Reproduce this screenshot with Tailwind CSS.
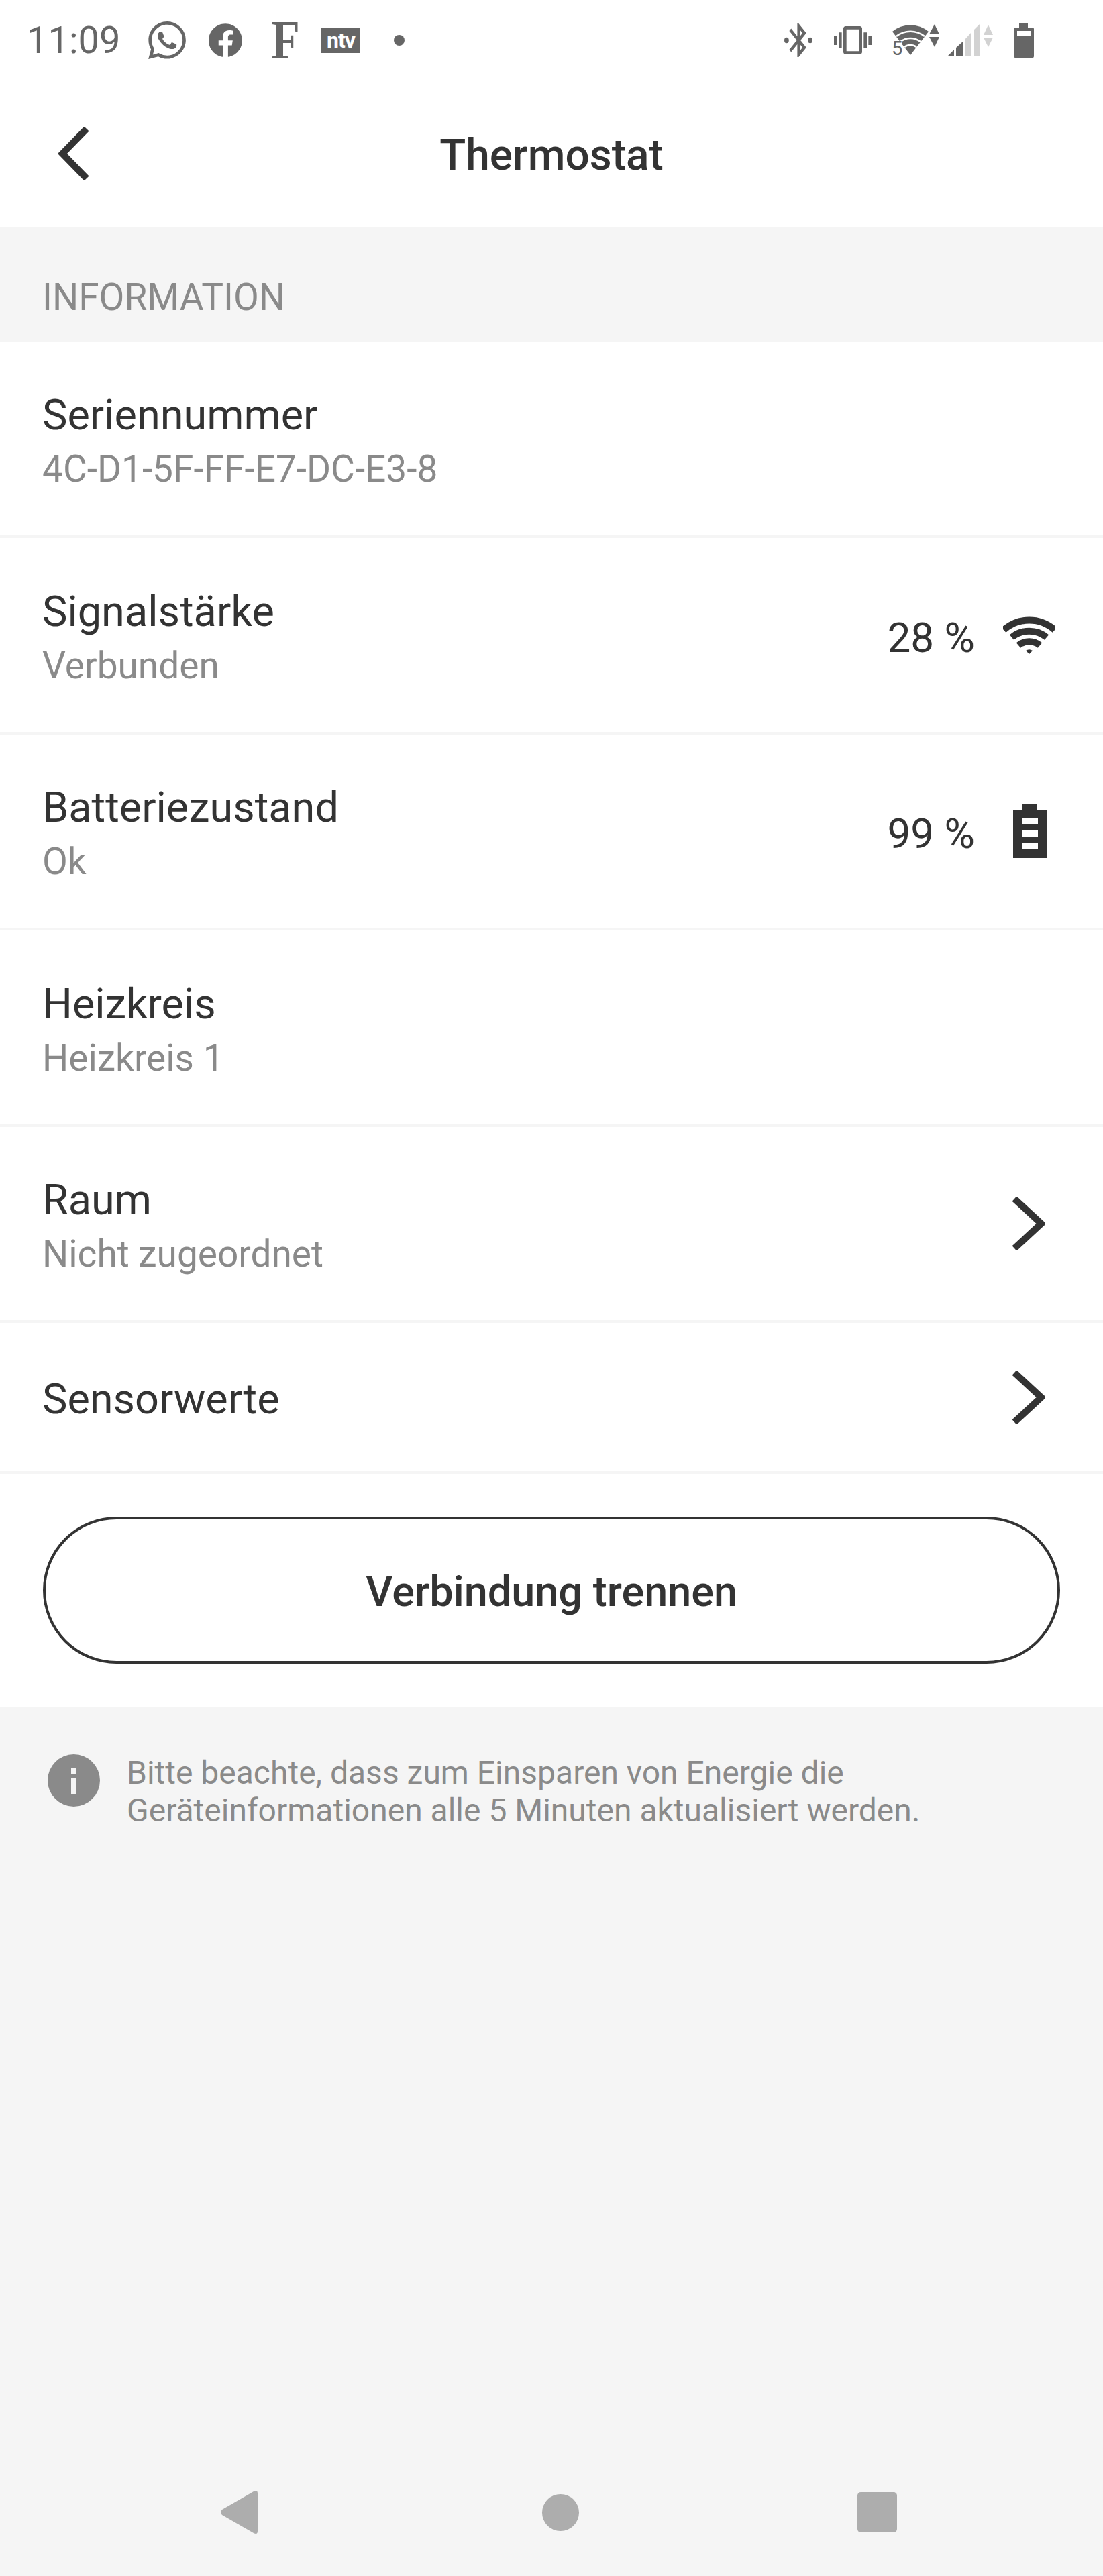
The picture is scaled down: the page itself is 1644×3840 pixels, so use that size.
<!DOCTYPE html>
<html lang="de">
<head>
<meta charset="UTF-8">
<title>Thermostat</title>
<script src="https://cdn.jsdelivr.net/npm/@tailwindcss/browser@4"></script>
</head>
<body class="bg-[#f5f5f5] font-['Roboto',sans-serif] text-[#333333]">
<div class="flex flex-col w-[1644px] h-[3840px] overflow-hidden">

  <!-- Status bar -->
  <div class="flex items-center justify-between h-[120px] bg-white text-[#666666] flex-shrink-0">
    <div class="flex items-center pl-[40px]">
      <span class="text-[56px] leading-none">11:09</span>
      <svg class="ml-[42px] w-[56px] h-[56px]" viewBox="0 0 24 24" fill="#666666"><path d="M17.472 14.382c-.297-.149-1.758-.867-2.03-.967-.273-.099-.471-.148-.67.15-.197.297-.767.966-.94 1.164-.173.199-.347.223-.644.075-.297-.15-1.255-.463-2.39-1.475-.883-.788-1.48-1.761-1.653-2.059-.173-.297-.018-.458.13-.606.134-.133.298-.347.446-.52.149-.174.198-.298.298-.497.099-.198.05-.371-.025-.52-.075-.149-.669-1.612-.916-2.207-.242-.579-.487-.5-.669-.51-.173-.008-.371-.01-.57-.01-.198 0-.52.074-.792.372-.272.297-1.04 1.016-1.04 2.479 0 1.462 1.065 2.875 1.213 3.074.149.198 2.096 3.2 5.077 4.487.709.306 1.262.489 1.694.625.712.227 1.36.195 1.871.118.571-.085 1.758-.719 2.006-1.413.248-.694.248-1.289.173-1.413-.074-.124-.272-.198-.57-.347m-5.421 7.403h-.004a9.87 9.87 0 01-5.031-1.378l-.361-.214-3.741.982.998-3.648-.235-.374a9.86 9.86 0 01-1.51-5.26c.001-5.45 4.436-9.884 9.888-9.884 2.64 0 5.122 1.03 6.988 2.898a9.825 9.825 0 012.893 6.994c-.003 5.45-4.437 9.884-9.885 9.884m8.413-18.297A11.815 11.815 0 0012.05 0C5.495 0 .16 5.335.157 11.892c0 2.096.547 4.142 1.588 5.945L.057 24l6.305-1.654a11.882 11.882 0 005.683 1.448h.005c6.554 0 11.89-5.335 11.893-11.893a11.821 11.821 0 00-3.48-8.413z"/></svg>
      <svg class="ml-[34px] w-[50px] h-[50px]" viewBox="0 0 24 24" fill="#666666"><path d="M24 12.073c0-6.627-5.373-12-12-12s-12 5.373-12 12c0 5.99 4.388 10.954 10.125 11.854v-8.385H7.078v-3.47h3.047V9.43c0-3.007 1.792-4.669 4.533-4.669 1.312 0 2.686.235 2.686.235v2.953H15.83c-1.491 0-1.956.925-1.956 1.874v2.25h3.328l-.532 3.47h-2.796v8.385C19.612 23.027 24 18.062 24 12.073z"/></svg>
      <span class="ml-[40px] w-[42px] text-center text-[82px] leading-[82px] font-bold scale-x-[0.85] font-['Liberation_Serif',serif]">F</span>
      <span class="ml-[35px] flex items-center justify-center w-[59px] h-[37px] bg-[#666666] text-white text-[32px] leading-none font-bold tracking-[-1px]">ntv</span>
      <span class="ml-[50px] w-[16px] h-[16px] rounded-full bg-[#666666]"></span>
    </div>
    <div class="flex items-center pr-[103px]">
      <svg class="w-[42px] h-[50px]" viewBox="1.3 2 21 20" preserveAspectRatio="none" fill="#666666"><path d="M17.71 7.71L12 2h-1v7.59L6.41 5 5 6.41 10.59 12 5 17.59 6.41 19 11 14.41V22h1l5.71-5.71-4.3-4.29 4.3-4.29zM13 5.83l1.88 1.88L13 9.59V5.83zm1.88 10.46L13 18.17v-3.76l1.88 1.88z"/><circle cx="3" cy="12" r="1.7"/><circle cx="20.6" cy="12" r="1.7"/></svg>
      <svg class="ml-[32px] w-[56px] h-[56px]" viewBox="0 0 24 24" fill="#666666"><path d="M0 15h2V9H0v6zm3 2h2V7H3v10zm19-8v6h2V9h-2zm-3 8h2V7h-2v10zM16.5 3h-9C6.67 3 6 3.67 6 4.5v15c0 .83.67 1.5 1.5 1.5h9c.83 0 1.5-.67 1.5-1.5v-15c0-.83-.67-1.5-1.5-1.5zM16 19H8V5h8v14z"/></svg>
      <div class="relative ml-[30px] w-[71px] h-[50px]">
        <svg class="w-[71px] h-[50px]" viewBox="0 0 71 50">
          <path d="M1 12 A42 42 0 0 1 55 12 L28 47 Z" fill="#666666"/>
          <path d="M7 19 A34 34 0 0 1 49 19 M13 27 A25 25 0 0 1 43 27 M19 35 A15 15 0 0 1 37 35" fill="none" stroke="#ffffff" stroke-width="2.5"/>
          <rect x="0" y="27" width="15" height="23" fill="#ffffff"/>
          <path d="M64 1 L71 16 H56 Z M56 20 H71 L64 35 Z" fill="#666666"/>
        </svg>
        <span class="absolute left-0 bottom-0 text-[29px] leading-[26px]">5</span>
      </div>
      <svg class="ml-[12px] w-[68px] h-[50px]" viewBox="0 0 68 50">
        <path d="M0 49 L10 39 V49 Z M13 49 V36 L23 27 V49 Z" fill="#666666"/>
        <path d="M26 49 V24 L35 14 V49 Z M39 49 V10 L49 0 V49 Z M61 2 L68 17 H54 Z M54 21 H68 L61 35 Z" fill="#d2d2d2"/>
      </svg>
      <svg class="ml-[31px] w-[30px] h-[51px]" viewBox="0 0 30 51">
        <path d="M8 0 H21 V6 H28 Q30 6 30 8 V49 Q30 51 28 51 H2 Q0 51 0 49 V8 Q0 6 2 6 H8 Z" fill="#666666"/>
        <rect x="5" y="11" width="20" height="8" fill="#ffffff"/>
      </svg>
    </div>
  </div>

  <!-- Header -->
  <div class="relative flex items-center justify-center h-[219px] pt-[4px] bg-white flex-shrink-0">
    <svg class="absolute left-[87px] top-[69px] w-[46px] h-[80px]" viewBox="0 0 46 80" fill="none" stroke="#333333" stroke-width="10"><path d="M42 3 L6 40 L42 77" stroke-linejoin="miter"/></svg>
    <h1 class="text-[64px] leading-none font-medium">Thermostat</h1>
  </div>

  <!-- Section label -->
  <div class="flex items-center h-[171px] pl-[63px] pt-[38px] text-[55px] text-[#8a8a8a] flex-shrink-0">INFORMATION</div>

  <!-- Rows -->
  <div class="flex flex-col bg-white flex-shrink-0">
    <div class="flex items-center justify-between h-[292px] pl-[63px] pr-[64px] border-b-[4px] border-[#f5f5f5]">
      <div class="pt-[10px]">
        <div class="text-[63px] leading-[81px]">Seriennummer</div>
        <div class="text-[55px] leading-[81px] text-[#8a8a8a]">4C-D1-5F-FF-E7-DC-E3-8</div>
      </div>
    </div>
    <div class="flex items-center justify-between h-[293px] pl-[63px] pr-[71px] border-b-[4px] border-[#f5f5f5]">
      <div class="pt-[10px]">
        <div class="text-[63px] leading-[81px]">Signalstärke</div>
        <div class="text-[55px] leading-[81px] text-[#8a8a8a]">Verbunden</div>
      </div>
      <div class="flex items-center">
        <span class="pt-[8px] text-[62px] leading-none">28 %</span>
        <svg class="ml-[42px] w-[78px] h-[56px]" viewBox="0 0 78 56" fill="none" stroke="#333333" stroke-width="10"><path d="M1 20 A57 57 0 0 1 77 20 M13 31 A41 41 0 0 1 65 31 M23 43 A25 25 0 0 1 55 43"/><path d="M34 51 A9 9 0 0 1 44 51 L39 56 Z" fill="#333333" stroke="none"/></svg>
      </div>
    </div>
    <div class="flex items-center justify-between h-[292px] pl-[63px] pr-[84px] border-b-[4px] border-[#f5f5f5]">
      <div class="pt-[10px]">
        <div class="text-[63px] leading-[81px]">Batteriezustand</div>
        <div class="text-[55px] leading-[81px] text-[#8a8a8a]">Ok</div>
      </div>
      <div class="flex items-center">
        <span class="pt-[8px] text-[62px] leading-none">99 %</span>
        <svg class="ml-[57px] w-[50px] h-[80px]" viewBox="0 0 50 80" fill="#333333"><path fill-rule="evenodd" d="M14 0 H36 V8 H50 V80 H0 V8 H14 Z M13 21 V30 H37 V21 Z M13 39 V48 H37 V39 Z M13 57 V66 H37 V57 Z"/></svg>
      </div>
    </div>
    <div class="flex items-center justify-between h-[293px] pl-[63px] pr-[64px] border-b-[4px] border-[#f5f5f5]">
      <div class="pt-[10px]">
        <div class="text-[63px] leading-[81px]">Heizkreis</div>
        <div class="text-[55px] leading-[81px] text-[#8a8a8a]">Heizkreis 1</div>
      </div>
    </div>
    <div class="flex items-center justify-between h-[292px] pl-[63px] pr-[86px] border-b-[4px] border-[#f5f5f5]">
      <div class="pt-[10px]">
        <div class="text-[63px] leading-[81px]">Raum</div>
        <div class="text-[55px] leading-[81px] text-[#8a8a8a]">Nicht zugeordnet</div>
      </div>
      <svg class="w-[50px] h-[80px]" viewBox="0 0 50 80" fill="none" stroke="#333333" stroke-width="10"><path d="M4 3 L44 40 L4 77"/></svg>
    </div>
    <div class="flex items-center justify-between h-[225px] pl-[63px] pr-[86px] border-b-[4px] border-[#f5f5f5]">
      <div class="pt-[6px] text-[63px] leading-[81px]">Sensorwerte</div>
      <svg class="w-[50px] h-[80px]" viewBox="0 0 50 80" fill="none" stroke="#333333" stroke-width="10"><path d="M4 3 L44 40 L4 77"/></svg>
    </div>
    <div class="flex pl-[64px] pr-[64px] pt-[64px] pb-[65px]">
      <button class="w-full h-[219px] rounded-full border-[4px] border-[#333333] text-[63px] font-medium pt-[6px]">Verbindung trennen</button>
    </div>
  </div>

  <!-- Hint -->
  <div class="flex items-start pl-[71px] pt-[70px]">
    <svg class="w-[78px] h-[78px] flex-shrink-0" viewBox="0 0 78 78"><circle cx="39" cy="39" r="39" fill="#8a8a8a"/><rect x="35" y="20" width="8" height="9" fill="#f5f5f5"/><rect x="35" y="35" width="8" height="24" fill="#f5f5f5"/></svg>
    <p class="ml-[40px] text-[48px] leading-[56px] text-[#8a8a8a]">Bitte beachte, dass zum Einsparen von Energie die<br>Geräteinformationen alle 5 Minuten aktualisiert werden.</p>
  </div>

  <!-- Navigation bar -->
  <div class="flex items-center h-[190px] mt-auto pl-[328px] flex-shrink-0">
    <svg class="w-[56px] h-[64px]" viewBox="0 0 56 64" fill="#adadad"><path d="M50 1 Q56 -2 56 4 V60 Q56 66 50 63 L3 36 Q-1 32 3 28 Z"/></svg>
    <span class="ml-[424px] w-[55px] h-[55px] rounded-full bg-[#adadad]"></span>
    <span class="ml-[415px] w-[59px] h-[60px] rounded-[5px] bg-[#adadad]"></span>
  </div>
</div>
</body>
</html>
